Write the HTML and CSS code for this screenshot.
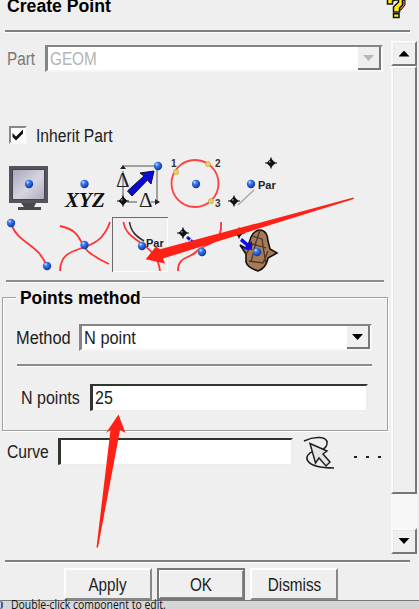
FILE: index.html
```html
<!DOCTYPE html>
<html lang="en">
<head>
<meta charset="utf-8">
<title>Create Point</title>
<link rel="stylesheet" href="styles.css">
</head>
<body>
<svg class="defs" width="0" height="0">
  <defs>
    <radialGradient id="blue" cx=".35" cy=".3" r=".7"><stop offset="0" stop-color="#d5e8ff"/><stop offset=".3" stop-color="#437fe8"/><stop offset="1" stop-color="#0b36ae"/></radialGradient>
    <linearGradient id="screen" x1="0" y1="0" x2="1" y2="1"><stop offset="0" stop-color="#a6a6ba"/><stop offset=".55" stop-color="#d6d6e2"/><stop offset="1" stop-color="#aaaabd"/></linearGradient>
    <g id="ball"><circle r="4.2" fill="url(#blue)"/></g>
    <g id="mark"><path d="M-6 0H6M0-5.500V5.500" stroke="#111" stroke-width="1.2"/><path d="M-4.500 0L0-4.500L4.500 0L0 4.500z" fill="#111"/><circle cx="-1.2" cy="-1.2" r=".9" fill="#999"/></g>
  </defs>
</svg>
<div class="dialog">
  <header class="header">
    <h1 class="title"><span class="t">Create Point</span></h1>
    <svg class="help" width="20" height="19" viewBox="0 0 20 19"><path d="M13 0h6v5l-4 5h-4z" fill="#d87a32" stroke="#111"/><path d="M1.500 0v4h5V1l3-1h3v2L7.500 7v5h6V8l3-3V0" fill="#ffed00" stroke="#111" stroke-width="1.500"/><path d="M7.500 13.800h5.500v3.700H7.500z" fill="#ffed00" stroke="#111" stroke-width="1.500"/></svg>
  </header>
  <div class="body">
    <main class="main">
      <div class="row part"><label class="label dim"><span class="t">Part</span></label><div class="field combo"><span class="t dim2">GEOM</span><i class="drop off"></i></div></div>
      <div class="row inherit"><span class="check"><svg width="14" height="14" viewBox="0 0 14 14"><path d="M1.500 5v4l3.500 3.500L12 5.500v-4L5 8.500z" fill="#111"/></svg></span><span class="t">Inherit Part</span></div>
      <div class="tools">
        <svg class="tool" viewBox="0 0 56 55"><path d="M9 4h39v37H9z" fill="#55535c"/><path d="M12.500 7.500h32v30h-32z" fill="url(#screen)" stroke="#44424b"/><path d="M21 41h15l-2 4h7v3H18v-3h6z" fill="#4b4950"/><use href="#ball" x="29" y="22"/></svg>
        <svg class="tool" viewBox="0 0 56 55"><use href="#ball" x="28.500" y="22"/><text x="9" y="45" class="xyz" textLength="40" lengthAdjust="spacingAndGlyphs">XYZ</text></svg>
        <svg class="tool" viewBox="0 0 56 55"><path d="M11 4h34v37M11 9v28M15 40h10M39 40h8" fill="none" stroke="#555"/><path d="M8 7l3-4 3 4zM43 37l5 3-5 3z" fill="#222"/><text x="4" y="25" class="delta">Δ</text><text x="27" y="45" class="delta">Δ</text><path d="M15.500 29L32 14l-4-3 14-2-3 13-3.500-4L20 34z" fill="#0909df" stroke="#111"/><use href="#mark" x="11" y="39"/><use href="#ball" x="46" y="4"/></svg>
        <svg class="tool" viewBox="0 0 56 55"><circle cx="27" cy="21.500" r="23.500" fill="none" stroke="#ff4141" stroke-width="1.800"/><g fill="#efcc60" stroke="#bc9e42" stroke-width=".6"><circle cx="8" cy="10" r="2.600"/><circle cx="40" cy="2" r="2.600"/><circle cx="43" cy="39" r="2.600"/></g><use href="#ball" x="28" y="22"/><g class="small"><text x="3" y="5">1</text><text x="47" y="5">2</text><text x="47" y="45">3</text></g></svg>
        <svg class="tool" viewBox="0 0 56 55"><path d="M14 43l16-15" stroke="#aaa" stroke-width="1.500"/><use href="#mark" x="47" y="1"/><use href="#mark" x="10" y="39"/><use href="#ball" x="27" y="22"/><text x="34" y="27" class="par">Par</text></svg>
        <svg class="tool" viewBox="0 0 56 55"><path d="M11 6C17 27 39 26 47 50" class="curve"/><use href="#ball" x="11" y="6"/><use href="#ball" x="47" y="49"/></svg>
        <svg class="tool" viewBox="0 0 56 55"><path d="M4 9C28 14 22 28 34 36C42 42 46 44 53 47M4 54C5 22 42 42 54 5" class="curve"/><use href="#ball" x="28.500" y="28"/></svg>
        <svg class="tool selected" viewBox="0 0 56 55"><path d="M11.500 5C14 26 45 25 48 54" class="curve"/><path d="M17.500 5C19 15 24 19 32 24" fill="none" stroke="#333" stroke-width="1.600"/><use href="#ball" x="30" y="29"/><text x="34" y="30" class="par">Par</text></svg>
        <svg class="tool" viewBox="0 0 56 55"><path d="M53 5C55 30 34 26 28 35C21 42 10 39 10 54" class="curve"/><use href="#mark" x="15" y="16"/><path d="M19 20l10 9" stroke="#0c0ced" stroke-width="3" stroke-dasharray="4 1"/><use href="#ball" x="34" y="35"/></svg>
        <svg class="tool" viewBox="0 0 56 55"><path d="M16 28L23 32L27 20C29 16 32 13 36 13C41 13 44 18 44 24L46 32L53 36L44 41C43 46 40 52 34 54C28 52 23 49 22 45V37z" fill="#a57b57" stroke="#17110e" stroke-width="1.600"/><path d="M28 19l10 3 4 26M22 37l7-10 13 4M25 44l14 2 5-12M36 13l-4 12-5 20" fill="none" stroke="#4b3526" stroke-width="1.300"/><use href="#mark" x="15" y="16"/><path d="M18 21l7 6 3-3v9l-9-1 3-3-6-5z" fill="#0b0bea"/><use href="#ball" x="33" y="35"/></svg>
      </div>
      <div class="rule first"></div>
      <section class="group">
        <h2 class="legend"><span class="t">Points method</span></h2>
        <div class="row method"><label class="label"><span class="t">Method</span></label><div class="field combo"><span class="t">N point</span><i class="drop"></i></div></div>
        <div class="rule second"></div>
        <div class="row npoints"><label class="label"><span class="t">N points</span></label><div class="field dark"><span class="t">25</span></div></div>
      </section>
      <div class="row curve-row"><label class="label"><span class="t">Curve</span></label><div class="field dark"></div>
        <svg class="picker" width="34" height="36" viewBox="0 0 34 36"><path d="M1 7C11 2 25 2 24 9C24 15 18 16 11 17C-1 21 0 34 31 34" fill="none" stroke="#222" stroke-width="1.500"/><path d="M7 9.500l17 7.500-4 3 7 8-4 4-7-8-3.500 5z" fill="#e4e4e4" stroke="#222" stroke-width="1.500"/></svg>
        <span class="dots"><i></i><i></i><i></i></span></div>
    </main>
    <aside class="scroll"><div class="bevel up"><i></i></div><div class="bevel thumb"></div><div class="trough"></div><div class="bevel down"><i></i></div></aside>
  </div>
  <footer class="footer"><button class="btn"><span class="t">Apply</span></button><button class="btn ok"><span class="t">OK</span></button><button class="btn"><span class="t">Dismiss</span></button></footer>
</div>
<div class="status"><i class="info"></i><span class="hint">Double-click component to edit.</span></div>
<svg class="arrows" width="419" height="609" viewBox="0 0 419 609"><path d="M353.500 197.500L160 249.300L156 246.500L145.700 259.300L165 263.500L163 258.500L353.800 199z"/><path d="M118.500 414.500L106 433L110.500 430L96.500 547.500L98 547.500L120 430L125.500 433z"/></svg>
</body>
</html>
```
FILE: styles.css
```css
* { box-sizing: border-box; }
body { margin: 0; width: 419px; height: 609px; overflow: hidden; position: relative; background: #efefef; color: #1c1c1c; font: 18px/26px "Liberation Sans", sans-serif; }
.defs { position: absolute; }
h1, h2 { margin: 0; font-size: 18px; line-height: 24px; color: #000; }
.t { display: inline-block; white-space: nowrap; transform: scaleX(.85); transform-origin: left center; }
.dialog { height: 601px; border-bottom: 1px solid #777; }
.header { height: 32px; margin: 0 9px 0 5px; border-bottom: 2px solid #808080; box-shadow: 0 1px #fff; display: flex; justify-content: space-between; }
.title { margin: -6px 0 0 2px; }
.title .t { transform: scaleX(.98); }
.help { margin-right: 4px; }
.body { height: 528px; display: flex; justify-content: space-between; padding-right: 2px; }
.main { width: 389px; }
.row { display: flex; height: 27px; align-items: stretch; }
.label { flex: none; line-height: 28px; }
.dim { color: #777; }
.dim2 { color: #b4b4b4; }
.field { background: #fff; border: 2px solid #858585; border-left-width: 3px; border-right-color: #fafafa; border-bottom-color: #f5f5f5; padding-left: 2px; line-height: 25px; display: flex; justify-content: space-between; }
.field.dark { border-top-color: #303530; border-left-color: #303530; border-right-color: #ececec; border-bottom-color: #ececec; border-bottom-width: 1px; }
.drop { width: 23px; background: #efefef; border-right: 2px solid #777; border-bottom: 2px solid #777; display: flex; justify-content: center; padding-top: 8px; }
.drop::after, .up i, .down i { content: ""; display: block; width: 11px; height: 6px; background: #000; clip-path: polygon(0 0, 100% 0, 50% 100%); }
.drop.off::after { background: #b7b7b7; }
.part { margin: 13px 0 0 7px; }
.part .label { width: 38px; }
.part .field { width: 338px; }
.inherit { margin: 47px 0 11px 9px; height: 32px; align-items: center; }
.inherit .t { transform: translateY(1px) scaleX(.87); }
.check { width: 18px; height: 18px; margin-right: 9px; background: #fff; border: 2px solid #888; border-right-color: #f7f7f7; border-bottom-color: #f7f7f7; display: block; line-height: 0; }
.tools { display: grid; grid-template-columns: repeat(5, 56px); grid-auto-rows: 55px; }
.tool { width: 56px; height: 55px; overflow: visible; }
.selected { box-shadow: inset 1px 1px #6c6c6c, inset -1px -1px #fff; }
.curve { fill: none; stroke: #ff3333; stroke-width: 1.8; }
.xyz { font: italic bold 21px "Liberation Serif", serif; fill: #111; }
.delta { font: 21px "Liberation Serif", serif; fill: #222; }
.par { font: bold 11px "Liberation Sans", sans-serif; fill: #222; }
.small { font: bold 10px "Liberation Sans", sans-serif; fill: #333; }
.rule { height: 2px; background: #8b8b8b; box-shadow: 0 1px #fff; }
.first { margin: 8px 5px 0 6px; }
.group { margin: 15px 1px 0 2px; height: 134px; border: 1px solid #a0a0a0; box-shadow: inset 1px 1px #fff, 1px 1px #fff; padding: 0 15px 0 14px; }
.legend { width: 126px; height: 24px; margin: -12px 0 0 -1px; padding-left: 4px; background: #efefef; }
.legend .t { transform: scaleX(.965); }
.method { margin-top: 14px; }
.method .label { width: 63px; margin-left: -1px; }
.method .t { transform: scaleX(.91); }
.method .field { width: 295px; }
.second { margin: 13px 0 0; }
.npoints { margin: 18px 0 0 4px; }
.npoints .label { width: 69px; }
.npoints .t { transform: scaleX(.89); }
.npoints .field { width: 278px; }
.curve-row { margin: 7px 0 0 7px; }
.curve-row .label { width: 51px; }
.curve-row .t { transform: scaleX(.87); }
.curve-row .field { width: 235px; }
.picker { margin: -4px 17px 0 10px; flex: none; }
.dots { display: flex; gap: 9px; padding-top: 18px; }
.dots i { width: 3px; height: 2px; background: #222; }
.scroll { width: 26px; height: 513px; margin-top: 9px; display: flex; flex-direction: column; }
.bevel { border: 2px solid #fafafa; border-right-color: #777; border-bottom-color: #777; box-shadow: inset 1px 1px #e6e6e6; }
.up, .down { height: 25px; display: flex; align-items: center; justify-content: center; }
.up i { clip-path: polygon(50% 0, 100% 100%, 0 100%); }
.thumb { height: 428px; }
.trough { height: 34px; background: #f7f7f7; }
.down { height: 26px; }
.footer { height: 40px; margin: 0 9px 0 5px; border-top: 2px solid #808080; box-shadow: inset 0 1px #fff; padding: 6px 0 0 59px; display: flex; gap: 5px; }
.btn { width: 88px; height: 32px; margin: 0; padding: 0; border: 2px solid #fff; border-right-color: #888; border-bottom-color: #888; background: #efefef; color: #1c1c1c; font: inherit; }
.btn .t { transform: translateY(1px) scaleX(.85); transform-origin: center; }
.ok { border: 2px solid #777; box-shadow: inset 1px 1px #fff, inset -1px -1px #888; }
.status { height: 8px; display: flex; gap: 8px; background: #d6d6d6; color: #111; }
.hint { font: 12px/7px "Open Sans", sans-serif; white-space: nowrap; transform: scaleX(.87); transform-origin: left center; }
.info { width: 3px; height: 8px; border-right: 2px solid #315bb5; border-radius: 0 5px 5px 0; }
.arrows { position: absolute; inset: 0; pointer-events: none; fill: #ff2115; }
```
